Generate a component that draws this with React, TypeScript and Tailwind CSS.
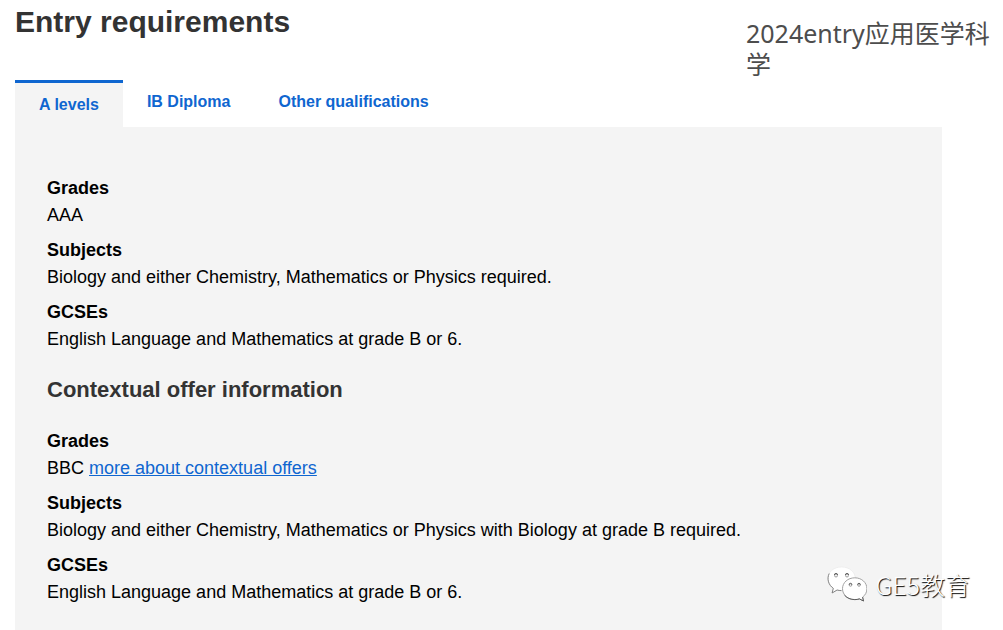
import { useState } from "react";
import clsx from "clsx";

interface Requirement {
  term: string;
  detail: string;
  link?: { label: string; href: string };
}

const tabs = ["A levels", "IB Diploma", "Other qualifications"];

const standardOffer: Requirement[] = [
  { term: "Grades", detail: "AAA" },
  {
    term: "Subjects",
    detail: "Biology and either Chemistry, Mathematics or Physics required.",
  },
  {
    term: "GCSEs",
    detail: "English Language and Mathematics at grade B or 6.",
  },
];

const contextualOffer: Requirement[] = [
  {
    term: "Grades",
    detail: "BBC",
    link: { label: "more about contextual offers", href: "#contextual-offers" },
  },
  {
    term: "Subjects",
    detail:
      "Biology and either Chemistry, Mathematics or Physics with Biology at grade B required.",
  },
  {
    term: "GCSEs",
    detail: "English Language and Mathematics at grade B or 6.",
  },
];

function RequirementList({ items }: { items: Requirement[] }) {
  return (
    <dl className="flex flex-col gap-2 text-lg leading-[27px] text-black">
      {items.map((item) => (
        <div key={item.term}>
          <dt className="font-bold">{item.term}</dt>
          <dd>
            {item.detail}
            {item.link && (
              <>
                {" "}
                <a href={item.link.href} className="text-[#0f66d0] underline">
                  {item.link.label}
                </a>
              </>
            )}
          </dd>
        </div>
      ))}
    </dl>
  );
}

function ChatBubbles() {
  return (
    <svg
      viewBox="0 0 42 36"
      className="h-9 w-[42px]"
      fill="#fff"
      stroke="#777"
      strokeWidth="0.9"
      strokeLinejoin="round"
      aria-hidden="true"
    >
      {/* light rim on the top of the larger bubble, shaded one below */}
      <path
        d="M16.500 1C8.900 1 2.900 6 2.900 12.600c0 4 2.200 7.500 5.400 9.700L7.100 27l5-3c1.300.4 2.700.6 4.400.6 8 0 13.800-5.400 13.800-12S24.500 1 16.500 1z"
        stroke="#e4e4e4"
        strokeWidth="0.5"
      />
      <path
        d="M4.200 7.500C1.500 13 3.700 19.200 8.300 22.300L7.100 27l5-3c1.300.4 2.700.6 4.400.6"
        fill="none"
      />
      <path
        d="M29.800 11.800c-6.900 0-12.300 4.800-12.300 10.900s5.400 10.900 12.300 10.900c1.700 0 3.200-.2 4.600-.7l4.100 2.100-.9-3.900c2.800-2 4.300-5 4.300-8.400 0-6.100-5.200-10.900-12.100-10.900z"
        stroke="#999"
      />
      <path
        d="M19.500 29.200c2.200 2.700 5.900 4.400 10.300 4.400 1.700 0 3.200-.2 4.600-.7l4.100 2.100-.9-3.900"
        fill="none"
        stroke="#555"
      />
      <g fill="#f4f4f4" stroke="#999">
        <circle cx="11" cy="9.500" r="1.500" />
        <circle cx="22" cy="9.500" r="1.500" />
        <circle cx="25.500" cy="19" r="1.300" />
        <circle cx="34" cy="19" r="1.300" />
      </g>
      <g fill="none" stroke="#555">
        <path d="M9.400 9a1.600 1.600 0 0 1 3.200 0M20.400 9a1.600 1.600 0 0 1 3.200 0" />
        <path d="M24.100 18.700a1.400 1.400 0 0 1 2.800 0M32.600 18.700a1.400 1.400 0 0 1 2.800 0" />
      </g>
    </svg>
  );
}

export default function App() {
  const [active, setActive] = useState(tabs[0]);

  return (
    <div className="relative flex min-h-screen flex-col bg-white pl-[15px] font-['Liberation_Sans',Arial,sans-serif]">
      <header className="flex items-start justify-between">
        <h1 className="pt-1 text-[30px] leading-9 font-bold text-[#333]">
          Entry requirements
        </h1>
        <p className="w-[257px] pt-[18px] font-['Noto_Sans','Noto_Sans_CJK_SC',sans-serif] text-[25px] leading-[31px] text-[#4d4d4d]">
          2024entry应用医学科学
        </p>
      </header>

      <div role="tablist" className="flex items-start">
        {tabs.map((tab) => (
          <button
            key={tab}
            type="button"
            role="tab"
            aria-selected={tab === active}
            onClick={() => setActive(tab)}
            className={clsx(
              "cursor-pointer px-6 py-2.5 text-base font-bold text-[#0f66d0]",
              tab === active && "border-t-[3px] border-[#0f66d0] bg-[#f4f4f4]",
            )}
          >
            {tab}
          </button>
        ))}
      </div>

      <main
        role="tabpanel"
        className="mr-[61px] flex-1 bg-[#f4f4f4] px-8 pt-12 pb-6"
      >
        <RequirementList items={standardOffer} />
        <h2 className="pt-[25px] pb-[26px] text-[22px] leading-6 font-bold text-[#333]">
          Contextual offer information
        </h2>
        <RequirementList items={contextualOffer} />
      </main>

      {/* Account badge */}
      <div className="absolute right-[33px] bottom-7 flex items-center gap-2">
        <ChatBubbles />
        <span className="font-['Noto_Sans_CJK_SC',sans-serif] text-[25px] leading-9 font-light text-white [text-shadow:1px_1px_1px_#000]">
          GE5教育
        </span>
      </div>
    </div>
  );
}
